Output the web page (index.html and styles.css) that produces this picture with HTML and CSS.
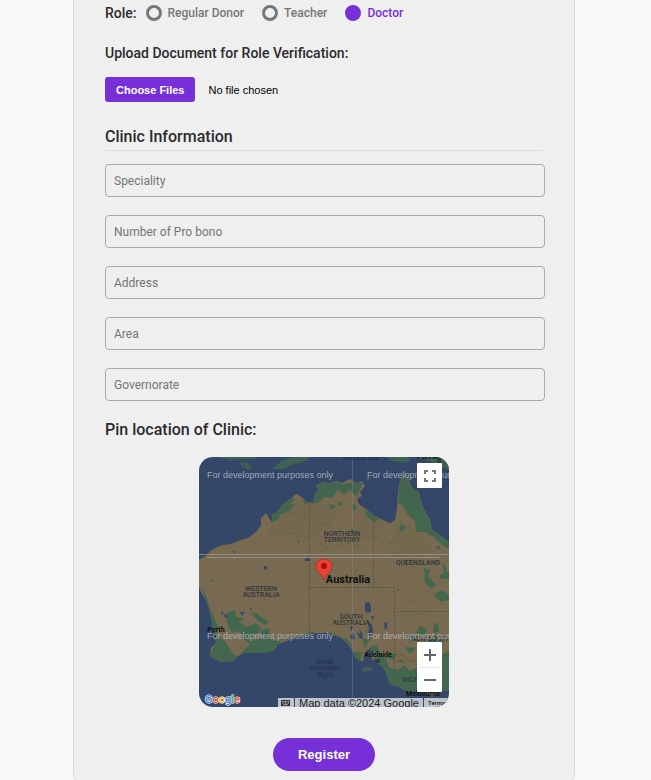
FILE: index.html
```html
<!DOCTYPE html>
<html lang="en">
<head>
<meta charset="utf-8">
<meta name="viewport" content="width=device-width, initial-scale=1">
<title>Register</title>
<link rel="stylesheet" href="styles.css">
</head>
<body>
<main class="page">
<form class="card">
  <div class="roles" role="radiogroup" aria-labelledby="roles-title">
    <span class="roles-title" id="roles-title">Role:</span>
    <label class="role"><input type="radio" name="role"><span>Regular Donor</span></label>
    <label class="role"><input type="radio" name="role"><span>Teacher</span></label>
    <label class="role"><input type="radio" name="role" checked><span>Doctor</span></label>
  </div>
  <label class="upload-title" for="documents">Upload Document for Role Verification:</label>
  <div class="upload">
    <button type="button" class="choose" id="documents">Choose Files</button>
    <span>No file chosen</span>
  </div>
  <h2 class="section-title ruled">Clinic Information</h2>
  <div class="fields">
    <input type="text" placeholder="Speciality" aria-label="Speciality">
    <input type="text" placeholder="Number of Pro bono" aria-label="Number of Pro bono">
    <input type="text" placeholder="Address" aria-label="Address">
    <input type="text" placeholder="Area" aria-label="Area">
    <input type="text" placeholder="Governorate" aria-label="Governorate">
  </div>
  <h2 class="section-title">Pin location of Clinic:</h2>
  <div class="map">
    <svg class="map-canvas" viewBox="0 0 250 250" role="img" aria-label="Map of Australia">
      <defs>
        <clipPath id="land-clip"><path id="land" d="M-2 104L3 101L8 98L11 94L16 91L24 88L32 87L39 84L51 80L58 74L62 68L62 61L67 56L71 63L74 65L73 57L78 56L83 48L89 43L93 41L95 38L98 37L104 41L108 45L114 46L115 39L119 33L117 29L123 25L130 26L137 24L143 26L151 22L157 26L163 24L166 29L161 35L163 39L158 42L160 47L168 53L176 59L186 64L191 66L196 63L198 51L199 35L201 23L206 15L210 21L211 27L215 33L220 35L223 48L228 57L231 63L233 73L241 78L250 85V234L240 234L233 240L226 236L218 234L210 235L200 230L191 227L187 216L184 210L178 206L177 200L174 204L171 197L173 190L166 195L164 205L156 201L155 196L151 190L143 181L136 179L130 176L123 176L113 176L106 179L96 180L88 184L79 187L75 194L63 196L46 196L39 199L34 204L21 205L11 199L12 191L17 186L16 177L14 173L12 160L8 146L1 133L-2 123Z"/></clipPath>
      </defs>
      <rect width="250" height="250" fill="#344769"/>
      <g fill="#3d6152">
        <path d="M18 0H60L56 2L43 2L32 3ZM40 5L48 6L53 10L50 13L43 9ZM83 3L94 0H112L104 5L92 8L85 12L72 12L78 8ZM188 0H209L211 4L204 6L193 4ZM218 0H250V12L239 10L231 4ZM164 210L174 210L172 214L164 215ZM126 18L132 18L130 21ZM166 23L170 20L170 24ZM235 247L250 241V250H235Z"/>
      </g>
      <use href="#land" fill="#786a50"/>
      <g clip-path="url(#land-clip)">
        <path fill="#73694f" opacity=".8" d="M78 52L109 44L142 52L130 71L109 83L86 75L69 81ZM158 46L188 65L177 84L150 79ZM196 60L223 76L241 105L224 96L207 111L195 97Z"/>
        <g fill="#43664f">
          <path d="M73 57L78 55L82 47L91 41L96 42L89 48L96 46L91 54L82 57L78 63L72 66ZM103 42L109 45L107 48ZM113 46L116 31L125 23L137 25L145 27L157 25L165 26L160 34L158 40L151 33L145 38L139 33L133 41L125 40L119 46ZM130 47L137 49L132 53ZM139 44L144 47L140 50ZM152 46L158 49L155 55ZM165 53L176 57L181 62L176 65L168 60ZM199 46L201 23L206 15L211 26L216 33L220 35L223 48L229 58L233 73L241 78L250 85V92L242 87L233 79L225 75L217 75L216 64L209 58L203 48ZM201 67L207 69L206 73L200 75ZM236 91L240 88L242 93ZM243 104L248 112L245 116ZM225 111L232 113L229 119L237 128L233 132L226 126ZM240 118L250 114V122L242 122Z"/>
          <path d="M1 124L7 139L12 154L20 171L17 179L26 184L33 196L39 199L34 206L18 207L10 199L16 188L11 166L7 145ZM39 199L51 187L43 181L49 173L55 177L54 184L67 178L74 184L82 182L77 197L60 199ZM28 156L36 153L37 160L46 162L39 165L48 170L57 166L62 172L58 178L51 175L44 178L39 174L33 176L28 167ZM52 156L58 156L62 160L69 164L67 168L59 164ZM61 174L69 171L72 178L66 181ZM80 183L98 179L116 174L113 181Z"/>
          <path d="M123 175L134 176L144 181L150 188L155 194L151 198L137 182ZM141 185L147 181L153 188L152 193ZM156 195L163 195L161 205L154 202ZM163 181L170 183L166 191ZM171 190L177 188L181 195L187 202L190 210L198 213L206 208L211 214L223 208L232 202L250 194V236H222L210 236L191 229L186 216L178 204ZM190 195L198 198L194 203L187 200ZM196 205L203 202L207 206ZM221 169L228 172L225 179L217 176ZM208 176L214 181L211 187ZM235 168L239 165L240 174L234 177ZM235 138L242 133L249 137L250 143L242 145ZM228 184L237 181L245 184L240 193L229 195ZM206 190L217 191L211 197ZM168 178L172 180L171 184Z"/>
        </g>
        <path fill="#344769" d="M106 102L110 100L111 104L106 104ZM65 109L68 109L68 113L65 112ZM12 123L14 123L14 125ZM34 94L36 94L36 97ZM98 84L100 84L100 86ZM22 154L25 156L23 158ZM25 157L30 159L26 161ZM41 155L46 155L43 159ZM51 150L53 152L51 153ZM66 175L68 176L66 178ZM166 146L170 145L172 149L172 155L168 156L166 153ZM185 166L188 165L188 172L186 173ZM172 159L175 159L174 164ZM169 164L173 168L174 175L170 180L168 176L170 173ZM151 169L155 170L152 174ZM151 179L154 176L156 181L153 183ZM160 171L163 177L162 180ZM198 132L200 132L199 134ZM152 74L154 71L154 75ZM158 174L162 178L164 176L163 182L160 181Z"/>
        <path class="borders" d="M110.500 45V122M109 130.500H176M110.500 122V176M174.500 55V130.500H195.500V154.500H250M195.500 154V228M195 197.500H204L210 204L218 203L225 210L234 211L242 219L250 220"/>
        <path fill="none" stroke="#53624e" stroke-width="2" stroke-dasharray="5 4 2 6" opacity=".35" d="M72 79L91 76L103 83L119 84L132 94M123 66L138 74L146 68M123 91L151 86L172 94M190 94L204 101L211 96L226 101M210 145L231 140L245 148M205 167L217 156L229 161M88 57L103 55L113 61M174 80L188 87L198 84"/>
      </g>
      <path d="M0 97.500H250M8 100.500H242" stroke="#a7a298" stroke-width="1" opacity=".65"/>
      <path d="M153.500 0V250" stroke="#8794a2" stroke-width="1" opacity=".35"/>
      <g class="places">
        <text x="143" y="79">NORTHERN</text><text x="143" y="85">TERRITORY</text>
        <text x="219" y="108">QUEENSLAND</text>
        <text x="62" y="134">WESTERN</text><text x="62" y="140">AUSTRALIA</text>
        <text x="152" y="162">SOUTH</text><text x="152" y="168">AUSTRALIA</text>
        <text x="219" y="225">VICTORIA</text><text x="232" y="184">NEW SOUTH</text>
      </g>
      <g class="sea"><text x="126" y="207">Great</text><text x="126" y="213">Australian</text><text x="126" y="220">Bight</text><text x="162" y="3">Arafura Sea</text></g>
      <g class="cities">
        <text x="17" y="175">Perth</text><text x="179" y="200">Adelaide</text><text x="224" y="239">Melbourne</text><text x="231" y="2">Port Mo</text>
        <circle cx="179" cy="204" r="1.5"/><circle cx="17" cy="179" r="1"/><circle cx="240" cy="4" r="1.5"/>
        <text class="country" x="149" y="126">Australia</text>
      </g>
      <g class="watermarks">
        <text x="8" y="21">For development purposes only</text><text x="168" y="21">For development purposes only</text>
        <text x="8" y="182">For development purposes only</text><text x="168" y="182">For development purposes only</text>
      </g>
      <path d="M125 124C124 116 117 116 117 109A8 7 0 0 1 133 109C133 116 126 116 125 124Z" fill="#ea4335" stroke="#b5342c" stroke-width="1"/>
      <circle cx="125" cy="109" r="3" fill="#a9110d"/>
      <g class="brand"><text x="6" y="246"><tspan fill="#4285f4">G</tspan><tspan fill="#ea4335">o</tspan><tspan fill="#fbbc04">o</tspan><tspan fill="#4285f4">g</tspan><tspan fill="#34a853">l</tspan><tspan fill="#ea4335">e</tspan></text></g>
    </svg>
    <button type="button" class="map-control fullscreen" aria-label="Toggle fullscreen view">
      <svg width="12" height="12" viewBox="0 0 12 12"><path d="M1 4V1H4M8 1H11V4M11 8V11H8M4 11H1V8" fill="none" stroke="#777" stroke-width="2"/></svg>
    </button>
    <div class="map-control zoom">
      <button type="button" aria-label="Zoom in"><svg width="12" height="12" viewBox="0 0 12 12"><path d="M0 6H12M6 0V12" stroke="#666" stroke-width="2"/></svg></button>
      <button type="button" aria-label="Zoom out"><svg width="12" height="12" viewBox="0 0 12 12"><path d="M0 6H12" stroke="#666" stroke-width="2"/></svg></button>
    </div>
    <div class="credits">
      <button type="button" class="keys" aria-label="Keyboard shortcuts"><svg width="9" height="6" viewBox="0 0 9 6"><path fill="#333" d="M0 0H9V6H0Z"/><path d="M1 1.500H8M1 3H8" stroke="#bbb" stroke-dasharray="1 .5"/><path d="M2.500 4.700H6.500" stroke="#bbb"/></svg></button>
      <span class="copyright">Map data ©2024 Google</span>
      <a class="terms" href="#">Terms</a>
    </div>
  </div>
  <button type="submit" class="register">Register</button>
</form>
</main>
</body>
</html>
```

FILE: styles.css
```css
* { box-sizing: border-box; }

body {
  margin: 0;
  background: #f8f8f8;
  color: #2b2b2b;
  font-family: Roboto, sans-serif;
}

button, input { font-family: inherit; }

.page {
  height: 100vh;
  padding: 0 76px 0 73px;
  overflow: hidden;
}

.card {
  display: flex;
  flex-direction: column;
  max-width: 502px;
  margin: 0 auto;
  padding: 4px 29px 12px 31px;
  background: #efefef;
  border: 1px solid #dcdcdc;
  border-top: 0;
  border-radius: 0 0 10px 10px;
}

.roles {
  display: flex;
  align-items: center;
  height: 18px;
}

.roles-title { margin-right: 9px; font-size: 14px; font-weight: 500; }

.role {
  display: flex;
  align-items: center;
  gap: 6px;
  margin-right: 18px;
  color: #777;
  font-size: 12px;
  font-weight: 500;
}

.role input {
  appearance: none;
  width: 16px;
  height: 16px;
  margin: 0;
  border: 3px solid #777;
  border-radius: 50%;
}

.role input:checked { background: #772fd8; border-color: #772fd8; }
.role:has(:checked) { color: #772fd8; }

.upload-title {
  margin-top: 22px;
  font-size: 14px;
  font-weight: 500;
  line-height: 18px;
}

.upload {
  display: flex;
  align-items: center;
  gap: 13px;
  margin-top: 15px;
  color: #000;
  font-family: "Liberation Sans", sans-serif;
  font-size: 11px;
  line-height: 12px;
}

.choose, .register {
  background: #772fd8;
  border: 0;
  color: #fff;
  font-family: "Liberation Sans", sans-serif;
  font-weight: 700;
}

.choose {
  height: 25px;
  padding: 0 11px;
  border-radius: 3px;
  font-size: 11px;
}

.section-title {
  margin: 19px 0 0;
  font-size: 16px;
  font-weight: 500;
  line-height: 20px;
}

.ruled {
  margin: 25px 2px 0 0;
  padding-bottom: 3px;
  border-bottom: 1px solid #dcdcdc;
}

.fields { display: grid; gap: 18px; margin-top: 13px; }

.fields input {
  width: 100%;
  height: 33px;
  padding: 0 8px;
  background: transparent;
  border: 1px solid #aaa;
  border-radius: 4px;
  font-size: 12px;
}

.fields input::placeholder { color: #757575; }

.map {
  position: relative;
  align-self: center;
  width: 250px;
  height: 250px;
  margin: 17px 2px 0 0;
  border-radius: 14px;
  overflow: hidden;
}

.map-canvas { display: block; width: 100%; height: 100%; }
.borders { fill: none; stroke: #4f4d40; stroke-width: 1; stroke-dasharray: 2 1; opacity: .6; }
.places { fill: #30353b; font-size: 7px; font-weight: 500; text-anchor: middle; }
.sea { fill: #202d47; font-size: 7px; text-anchor: middle; }
.cities { fill: #111; font-size: 7px; font-weight: 700; text-anchor: middle; }
.cities circle { fill: none; stroke: #222; }
.cities .country { font-size: 11px; }
.watermarks { fill: #b5bac0; opacity: .85; font-family: "Liberation Sans", sans-serif; font-size: 9px; }
.brand { stroke: #fff; stroke-width: 1; paint-order: stroke; font-size: 11px; font-weight: 500; }

.map-control {
  position: absolute;
  right: 7px;
  width: 25px;
  background: #fff;
  border: 0;
  border-radius: 1px;
}

.fullscreen { top: 6px; height: 25px; display: grid; place-items: center; padding: 0; }
.zoom { bottom: 15px; display: grid; }

.zoom button {
  display: grid;
  place-items: center;
  height: 25px;
  padding: 0;
  background: transparent;
  border: 0;
}

.zoom button + button { margin: 0 3px; border-top: 1px solid #e6e6e6; }

.credits {
  position: absolute;
  right: 0;
  bottom: 0;
  display: flex;
  gap: 1px;
  height: 9px;
  overflow: hidden;
  color: #222;
  font-size: 11px;
  line-height: 10px;
  white-space: nowrap;
}

.keys, .copyright, .terms { background: #bdc2cc; }
.keys { display: grid; place-items: center; width: 16px; padding: 0; border: 0; }
.copyright { padding: 0 4px; font-family: "Liberation Sans", sans-serif; }
.terms { width: 25px; padding-left: 4px; color: #111; font-size: 6px; font-weight: 500; text-decoration: none; }

.register {
  align-self: center;
  height: 33px;
  margin: 31px 2px 0 0;
  padding: 0 25px;
  border-radius: 17px;
  font-size: 13px;
}
```
